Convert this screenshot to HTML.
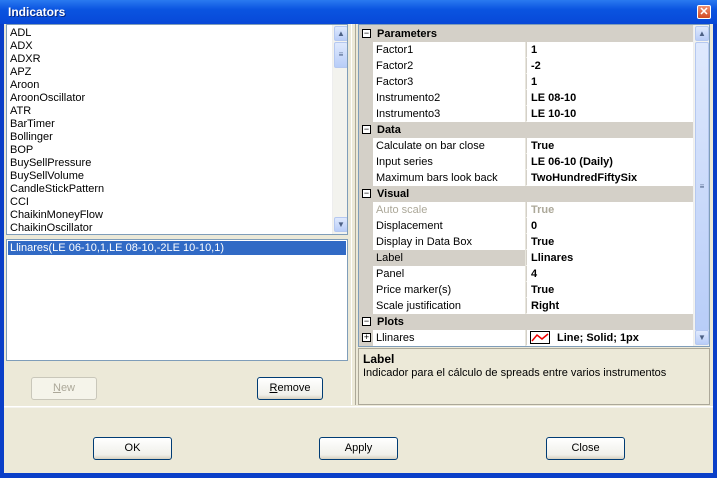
<!DOCTYPE html>
<html><head><meta charset="utf-8">
<style>
*{margin:0;padding:0;box-sizing:border-box}
body{width:717px;height:478px;overflow:hidden;background:#0a3fc8;font-family:"Liberation Sans",sans-serif;font-size:11px;position:relative}
.a{position:absolute}
#title{left:0;top:0;width:717px;height:24px;background:linear-gradient(#2a7af0,#0a54e0 40%,#0848d8);}
#title span{position:absolute;left:8px;top:5px;color:#fff;font-weight:bold;font-size:12px;text-shadow:1px 1px #0a2a80}
#x{left:697px;top:5px;width:14px;height:14px;background:linear-gradient(#f09070,#d24a22);border:1px solid #fff;border-radius:2px;color:#fff;font-weight:bold;font-size:11px;line-height:12px;text-align:center}
#client{left:4px;top:24px;width:709px;height:449px;background:#ece9d8}
.box{background:#fff;border:1px solid #7f9db9}
.item{height:13px;line-height:13px;padding-left:3px;font-size:11px;color:#000;white-space:nowrap}
.sb{background:#f3f3ee;border-left:1px solid #eee}
.sbtn{position:absolute;left:1px;width:14px;height:15px;background:linear-gradient(#dfe9fd,#b8cdf8);border:1px solid #b5c8f0;border-radius:2px;color:#4d6185;font-size:8px;text-align:center;line-height:13px}
.btn{position:absolute;height:23px;border:1px solid #003c74;border-radius:3px;background:linear-gradient(#fff,#f0f0ea 80%,#d6d0c0);text-align:center;line-height:21px;font-size:11px;color:#000}
.row{position:absolute;left:14px;width:320px;height:16px;border-bottom:1px solid #f0efe8}
.row .n{position:absolute;left:0;width:153px;height:16px;line-height:16px;padding-left:3px;background:#fff;border-right:1px solid #e8e6dd}
.row .v{position:absolute;left:154px;width:166px;height:16px;line-height:16px;padding-left:4px;background:#fff;font-weight:bold}
.cat{position:absolute;left:0;width:334px;height:16px;background:#d4d0c8;font-weight:bold;line-height:16px;padding-left:18px}
.pm{position:absolute;left:3px;top:3px;width:9px;height:9px;border:1px solid #000;background:#fff;font-size:9px;line-height:7px;text-align:center;font-weight:normal}
</style></head><body>
<div id="title" class="a"><span>Indicators</span></div>
<div id="x" class="a">✕</div>
<div id="client" class="a"></div>

<div class="a box" style="left:6px;top:24px;width:342px;height:211px;overflow:hidden">
<div style="padding-top:2px">
<div class="item">ADL</div><div class="item">ADX</div><div class="item">ADXR</div><div class="item">APZ</div><div class="item">Aroon</div><div class="item">AroonOscillator</div><div class="item">ATR</div><div class="item">BarTimer</div><div class="item">Bollinger</div><div class="item">BOP</div><div class="item">BuySellPressure</div><div class="item">BuySellVolume</div><div class="item">CandleStickPattern</div><div class="item">CCI</div><div class="item">ChaikinMoneyFlow</div><div class="item">ChaikinOscillator</div>
</div>
<div class="a sb" style="left:325px;top:0;width:16px;height:209px">
<div class="sbtn" style="top:1px">▲</div>
<div class="sbtn" style="top:17px;height:26px;line-height:24px">≡</div>
<div class="sbtn" style="top:192px">▼</div>
</div>
</div>
<div class="a box" style="left:6px;top:239px;width:342px;height:122px">
<div style="margin:1px;height:14px;background:#316ac5;color:#fff;line-height:14px;padding-left:2px">Llinares(LE 06-10,1,LE 08-10,-2LE 10-10,1)</div>
</div>
<div class="btn" style="left:31px;top:377px;width:66px;border-color:#c9c7ba;background:#f5f4ea;color:#aca899"><u>N</u>ew</div>
<div class="btn" style="left:257px;top:377px;width:66px"><u>R</u>emove</div>

<div class="a" style="left:351px;top:24px;width:5px;height:381px;border-left:1px solid #fff;border-right:1px solid #aca899"></div>

<div class="a" style="left:358px;top:24px;width:352px;height:323px;border:1px solid #7f9db9;background:#d4d0c8;overflow:hidden">
<div class="a" style="left:0;top:1px;width:334px;height:321px">
<div class="cat" style="top:0"><div class="pm">−</div>Parameters</div>
<div class="row" style="top:16px"><div class="n">Factor1</div><div class="v">1</div></div>
<div class="row" style="top:32px"><div class="n">Factor2</div><div class="v">-2</div></div>
<div class="row" style="top:48px"><div class="n">Factor3</div><div class="v">1</div></div>
<div class="row" style="top:64px"><div class="n">Instrumento2</div><div class="v">LE 08-10</div></div>
<div class="row" style="top:80px"><div class="n">Instrumento3</div><div class="v">LE 10-10</div></div>
<div class="cat" style="top:96px"><div class="pm">−</div>Data</div>
<div class="row" style="top:112px"><div class="n">Calculate on bar close</div><div class="v">True</div></div>
<div class="row" style="top:128px"><div class="n">Input series</div><div class="v">LE 06-10 (Daily)</div></div>
<div class="row" style="top:144px"><div class="n">Maximum bars look back</div><div class="v">TwoHundredFiftySix</div></div>
<div class="cat" style="top:160px"><div class="pm">−</div>Visual</div>
<div class="row" style="top:176px;color:#aca899"><div class="n">Auto scale</div><div class="v">True</div></div>
<div class="row" style="top:192px"><div class="n">Displacement</div><div class="v">0</div></div>
<div class="row" style="top:208px"><div class="n">Display in Data Box</div><div class="v">True</div></div>
<div class="row" style="top:224px"><div class="n" style="background:#d4d0c8">Label</div><div class="v">Llinares</div></div>
<div class="row" style="top:240px"><div class="n">Panel</div><div class="v">4</div></div>
<div class="row" style="top:256px"><div class="n">Price marker(s)</div><div class="v">True</div></div>
<div class="row" style="top:272px"><div class="n">Scale justification</div><div class="v">Right</div></div>
<div class="cat" style="top:288px"><div class="pm">−</div>Plots</div>
<div class="pm" style="top:307px">+</div>
<div class="row" style="top:304px"><div class="n">Llinares</div><div class="v"><svg width="20" height="13" style="position:absolute;left:3px;top:1px"><rect x="0.5" y="0.5" width="19" height="12" fill="#fff" stroke="#000"/><path d="M2 10 L7 4 L12 8 L18 3" stroke="#e00" stroke-width="1.5" fill="none"/></svg><span style="padding-left:26px">Line; Solid; 1px</span></div></div>
</div>
<div class="a sb" style="left:334px;top:0;width:16px;height:321px">
<div class="sbtn" style="top:1px">▲</div>
<div class="sbtn" style="top:17px;height:289px;line-height:287px">≡</div>
<div class="sbtn" style="top:305px">▼</div>
</div>
</div>

<div class="a" style="left:358px;top:348px;width:352px;height:57px;border:1px solid #aca899;background:#ece9d8">
<div style="padding:3px 0 0 4px;font-weight:bold;font-size:12px">Label</div>
<div style="padding:1px 0 0 4px">Indicador para el cálculo de spreads entre varios instrumentos</div>
</div>

<div class="a" style="left:4px;top:406px;width:709px;height:2px;border-top:1px solid #fff;border-bottom:1px solid #f4f3ee"></div>

<div class="btn" style="left:93px;top:437px;width:79px">OK</div>
<div class="btn" style="left:319px;top:437px;width:79px">Apply</div>
<div class="btn" style="left:546px;top:437px;width:79px">Close</div>
</body></html>
